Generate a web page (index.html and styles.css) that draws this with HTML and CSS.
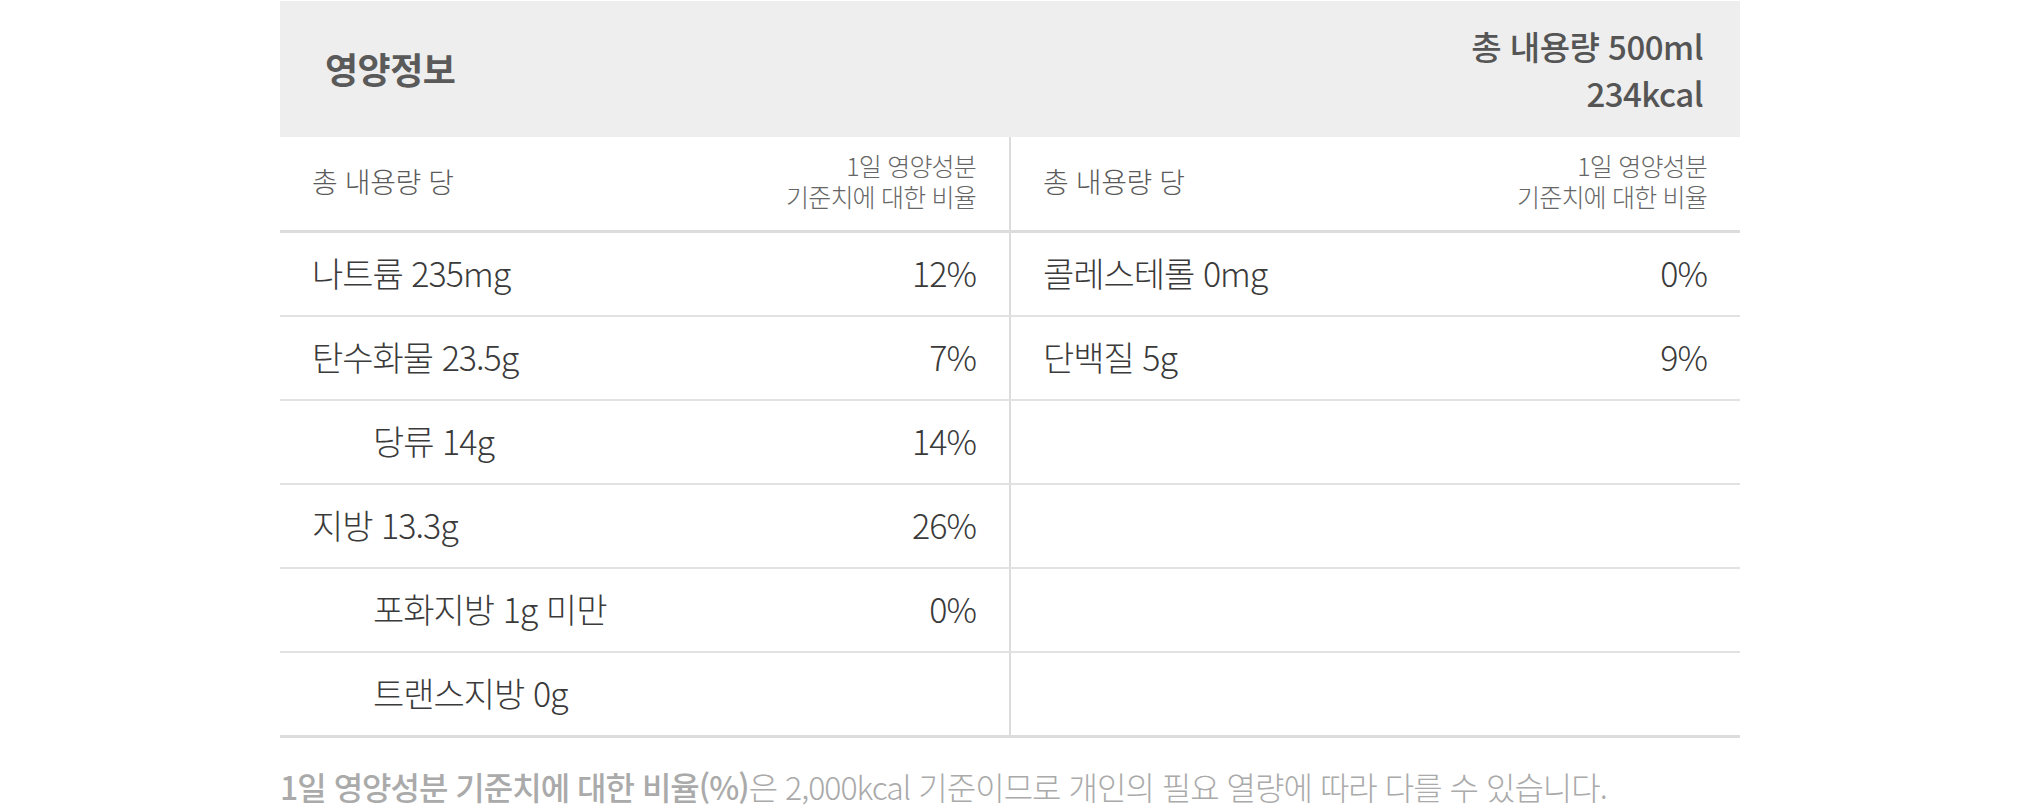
FILE: index.html
```html
<!DOCTYPE html>
<html lang="ko">
<head>
<meta charset="utf-8">
<title>영양정보</title>
<link rel="stylesheet" href="styles.css">
</head>
<body>
<div class="nutrition">
  <div class="head">
    <h2 class="title">영양정보</h2>
    <div class="total">
      <div>총 내용량 500ml</div>
      <div>234kcal</div>
    </div>
  </div>
  <div class="grid">
    <div class="cell sub"><span class="per">총 내용량 당</span><span class="ratio"><span class="line">1일 영양성분</span><span class="line">기준치에 대한 비율</span></span></div>
    <div class="cell sub right"><span class="per">총 내용량 당</span><span class="ratio"><span class="line">1일 영양성분</span><span class="line">기준치에 대한 비율</span></span></div>

    <div class="cell"><span>나트륨 235mg</span><span>12%</span></div>
    <div class="cell right"><span>콜레스테롤 0mg</span><span>0%</span></div>

    <div class="cell"><span>탄수화물 23.5g</span><span>7%</span></div>
    <div class="cell right"><span>단백질 5g</span><span>9%</span></div>

    <div class="cell indent"><span>당류 14g</span><span>14%</span></div>
    <div class="cell right"></div>

    <div class="cell"><span>지방 13.3g</span><span>26%</span></div>
    <div class="cell right"></div>

    <div class="cell indent"><span>포화지방 1g 미만</span><span>0%</span></div>
    <div class="cell right"></div>

    <div class="cell indent last"><span>트랜스지방 0g</span><span></span></div>
    <div class="cell right last"></div>
  </div>
  <p class="note"><strong>1일 영양성분 기준치에 대한 비율(%)</strong>은 2,000kcal 기준이므로 개인의 필요 열량에 따라 다를 수 있습니다.</p>
</div>
</body>
</html>
```
FILE: styles.css
```css
* { box-sizing: border-box; }
html, body { margin: 0; padding: 0; background: #fff; }
body {
  padding-top: 1px;
  font-family: "Noto Sans CJK KR", "Noto Sans", sans-serif;
  color: #333;
}
.nutrition {
  width: 1460px;
  margin: 0 auto;
}
.head {
  height: 136px;
  background: #eeeeee;
  display: flex;
  align-items: center;
  justify-content: space-between;
  padding: 0 37px 0 45px;
}
.title {
  margin: 0;
  font-size: 36px;
  font-weight: 700;
  color: #5a5a5a;
  letter-spacing: -0.5px;
  padding-bottom: 2px;
}
.total {
  text-align: right;
  font-size: 33px;
  font-weight: 500;
  line-height: 47px;
  color: #555;
  letter-spacing: -0.5px;
  padding-top: 2px;
}
.grid {
  display: grid;
  grid-template-columns: 729px 731px;
}
.cell {
  height: 84px;
  border-bottom: 2px solid #e2e2e2;
  display: flex;
  align-items: center;
  justify-content: space-between;
  padding: 0 33px 4px 32px;
  font-size: 34px;
  font-weight: 300;
  color: #3a3a3a;
  letter-spacing: -1px;
}
.cell.right {
  border-left: 2px solid #dcdcdc;
  padding-left: 32px;
}
.cell.sub {
  height: 96px;
  border-bottom: 3px solid #dcdcdc;
  color: #666;
  padding-bottom: 5px;
}
.per {
  font-size: 28px;
  letter-spacing: -0.4px;
  color: #5a5a5a;
}
.ratio {
  display: flex;
  flex-direction: column;
  align-items: flex-end;
  font-size: 25px;
  letter-spacing: -0.8px;
}
.ratio .line {
  display: block;
  height: 31px;
  line-height: 31px;
}
.cell.indent { padding-left: 93px; }
.cell.last {
  height: 85px;
  border-bottom: 3px solid #dcdcdc;
}
.note {
  margin: 25px 0 0 0;
  font-size: 32px;
  font-weight: 300;
  color: #aaa;
  letter-spacing: -1px;
  white-space: nowrap;
}
.note strong { font-weight: 500; color: #aaa; }
```
